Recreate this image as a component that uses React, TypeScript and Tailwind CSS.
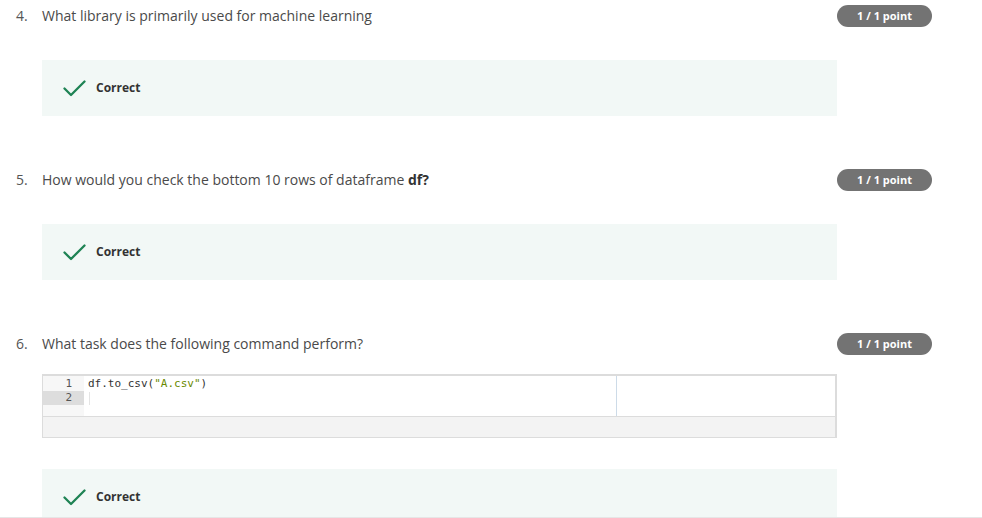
import type { ReactNode } from 'react'

const font = { fontFamily: '"Open Sans", "Noto Sans", sans-serif' }

function PointBadge() {
  return (
    <span className="flex h-[22px] w-[95px] items-center justify-center rounded-full bg-[#737373] text-[11px] font-bold text-white">
      1 / 1 point
    </span>
  )
}

function CorrectBox({ className = '' }: { className?: string }) {
  return (
    <div className={`flex h-[56px] items-center bg-[#f2f8f6] pl-[21px] ${className}`}>
      <svg width="23" height="17" viewBox="0 0 23 17" fill="none" className="mt-[1px]">
        <path d="M1.5 8.5 L8 15 L21.5 1.5" stroke="#1f8354" strokeWidth="2.3" strokeLinecap="round" strokeLinejoin="round" />
      </svg>
      <span className="ml-[10px] text-[12px] font-bold text-[#333]">Correct</span>
    </div>
  )
}

interface QuestionProps {
  num: number
  title: ReactNode
  className?: string
  children: ReactNode
}

function Question({ num, title, className = '', children }: QuestionProps) {
  return (
    <div className={`flex ${className}`}>
      <div className="w-[42px] shrink-0 pl-[16px] text-[14px] leading-[22px] text-[#555]">{num}.</div>
      <div className="w-[795px] shrink-0">
        <div className="text-[14px] leading-[22px] text-[#4a4a4a]">{title}</div>
        {children}
      </div>
      <div className="shrink-0">
        <PointBadge />
      </div>
    </div>
  )
}

function CodeEditor() {
  const mono = { fontFamily: '"DejaVu Sans Mono", "Liberation Mono", monospace' }
  return (
    <div className="mt-[19px] border border-t-2 border-r-2 border-[#dcdcdc]">
      <div className="relative flex h-[40px] bg-white text-[11px] leading-[14px]" style={mono}>
        <div className="w-[41px] shrink-0 bg-[#f7f7f7] pt-[1px] text-right text-[#555]">
          <div className="pr-[12px]">1</div>
          <div className="bg-[#dddddd] pr-[12px]">2</div>
        </div>
        <div className="pl-[4px] pt-[1px] text-[#333]">
          <div>
            df.to_csv(<span className="text-[#6a8a00]">"A.csv"</span>)
          </div>
          <div className="ml-[1px] mt-[1px] h-[13px] w-px bg-[#e4e4e4]" />
        </div>
        <div className="absolute left-[573px] top-0 h-full w-px bg-[#cddbe8]" />
      </div>
      <div className="h-[21px] border-t border-[#dcdcdc] bg-[#f3f3f3]" />
    </div>
  )
}

export default function App() {
  return (
    <div className="h-[518px] w-[982px] overflow-hidden border-b border-[#e6e6e6] bg-white pt-[5px]" style={font}>
      <Question num={4} title="What library is primarily used for machine learning">
        <CorrectBox className="mt-[33px]" />
      </Question>
      <Question
        num={5}
        className="mt-[53px]"
        title={
          <>
            How would you check the bottom 10 rows of dataframe <b className="text-[#333]">df?</b>
          </>
        }
      >
        <CorrectBox className="mt-[33px]" />
      </Question>
      <Question num={6} className="mt-[53px]" title="What task does the following command perform?">
        <CodeEditor />
        <CorrectBox className="mt-[31px]" />
      </Question>
    </div>
  )
}
